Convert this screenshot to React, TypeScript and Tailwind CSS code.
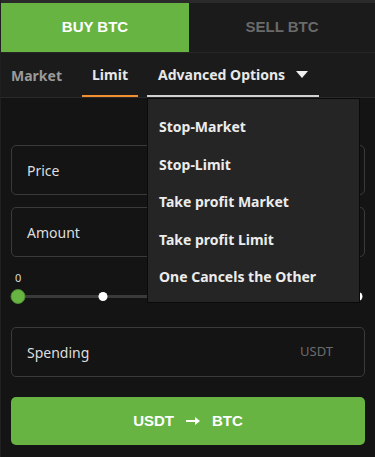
import React from "react";

const ub = { fontFamily: '"Noto Sans", "Open Sans", sans-serif' };
const ar = { fontFamily: '"Liberation Sans", Arial, sans-serif' };

export default function App() {
  const items = ["Stop-Market", "Stop-Limit", "Take profit Market", "Take profit Limit", "One Cancels the Other"];
  return (
    <div className="relative w-[375px] h-[457px] overflow-hidden bg-[#141414] border-l border-[#202020]">
      <div className="h-[3px] bg-[#2a2a2a]" />
      <div className="flex h-[49px]" style={ar}>
        <div className="w-[188px] bg-[#67b443] flex items-center justify-center text-white font-bold text-[15px]">BUY BTC</div>
        <div className="flex-1 bg-[#1b1b1b] flex items-center justify-center text-[#6a6a6a] font-bold text-[15px]">SELL BTC</div>
      </div>
      <div className="relative h-[46px] bg-[#1b1b1b] border-t border-[#262626] border-b border-b-[#2a2a2a] flex items-stretch" style={ub}>
        <div className="pl-[10px] w-[81px] flex items-center text-[14px] font-bold text-[#9a9a9a]">Market</div>
        <div className="w-[56px] flex items-center justify-center text-[14px] font-bold text-[#e8e8e8] border-b-2 border-[#f0902f]">Limit</div>
        <div className="ml-[9px] w-[172px] flex items-center pl-[11px] text-[14px] font-bold text-[#e8e8e8] border-b-2 border-[#d0d0d0] gap-[11px]">
          <span>Advanced Options</span>
          <svg width="12" height="7" viewBox="0 0 12 7"><path d="M0 0 L12 0 L6 7 Z" fill="#f0f0f0" /></svg>
        </div>
        <div className="absolute left-[146px] top-[45px] w-[213px] h-[205px] bg-[#252525] border border-[#0a0a0a] z-10 flex flex-col pt-[9px]">
          {items.map((t) => (
            <div key={t} className="h-[37.5px] flex items-center pl-[11px] text-[14px] font-bold text-[#ececec]">{t}</div>
          ))}
        </div>
      </div>
      <div className="px-[10px] pt-[47px]" style={ub}>
        <div className="h-[50px] rounded-[5px] border border-[#3a3a3a] flex items-center pl-[15px] text-[14px] text-[#dedede]">Price</div>
        <div className="mt-[12px] h-[50px] rounded-[5px] border border-[#3a3a3a] flex items-center pl-[15px] text-[14px] text-[#dedede]">Amount</div>
        <div className="mt-[14px] pl-[4px] text-[11px] text-[#dedede] leading-[14px]">0</div>
        <div className="relative mt-[5px] h-[14px] mx-[7px]">
          <div className="absolute left-0 right-0 top-[5px] h-[3px] bg-[#3a3a3a]" />
          {[25, 50, 75, 100].map((p) => (
            <div key={p} className="absolute top-[2px] w-[9px] h-[9px] rounded-full bg-white -translate-x-1/2" style={{ left: `${p}%` }} />
          ))}
          <div className="absolute left-0 top-[-1px] w-[15px] h-[15px] rounded-full bg-[#67b443] border border-[#4e8a33] -translate-x-1/2" />
        </div>
        <div className="mt-[23px] h-[50px] rounded-[5px] border border-[#3a3a3a] flex items-center justify-between pl-[15px] pr-[31px] text-[14px]">
          <span className="text-[#dedede]">Spending</span>
          <span className="text-[#6c6c6c] text-[13px]">USDT</span>
        </div>
        <div className="mt-[20px] h-[48px] rounded-[5px] bg-[#67b443] flex items-center justify-center gap-[12px] text-white font-bold text-[15px]" style={ar}>
          <span>USDT</span>
          <svg width="14" height="8" viewBox="0 0 14 8"><path d="M0 3 H9 V0 L14 4 L9 8 V5 H0 Z" fill="#fff" /></svg>
          <span>BTC</span>
        </div>
      </div>
    </div>
  );
}
